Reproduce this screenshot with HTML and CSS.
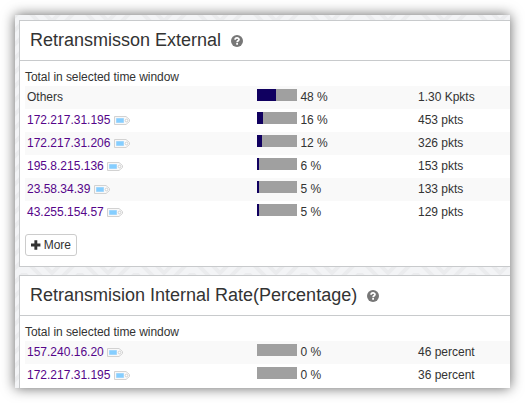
FILE: index.html
```html
<!DOCTYPE html>
<html lang="en">
<head>
<meta charset="utf-8">
<title>Retransmission</title>
<link rel="stylesheet" href="styles.css">
</head>
<body>
<svg class="defs" width="0" height="0">
  <symbol id="help" viewBox="0 0 12 12"><circle cx="6" cy="6" r="6" fill="#777"/><path d="M4.1 4.7C4.1 2.4 8 2.4 8 4.5C8 5.8 6.1 5.8 6.1 7.2" fill="none" stroke="#fff" stroke-width="1.7"/><path d="M5.2 8h1.8v1.700H5.200z" fill="#fff"/></symbol>
  <symbol id="tag" viewBox="0 0 16 9"><path d="M.5.5H12L15.500 3.500V5.500L12 8.500H.5z" fill="#f8f8f8" stroke="#d2d2d2"/><path d="M2.500 2.500h7v4h-7z" fill="#85ceff" stroke="#a0d6fc"/><circle cx="12.500" cy="4.500" r="1.300" fill="#fff" stroke="#c8c8c8" stroke-width=".8"/></symbol>
  <symbol id="plus" viewBox="0 0 10 10"><path d="M3.500 0h3v3.500H10v3H6.500V10h-3V6.500H0v-3h3.500z" fill="#333"/></symbol>
</svg>
<main class="window">
  <svg class="backdrop">
    <defs><pattern id="zigzag" width="56" height="14" patternUnits="userSpaceOnUse" patternTransform="translate(37 6)">
      <path d="M-28 0L0 28L28 0L56 28L84 0M-28 -14L0 14L28 -14L56 14L84 -14M-28 -28L0 0L28 -28L56 0L84 -28" fill="none" stroke="#ebecee" stroke-width="4"/>
    </pattern></defs>
    <rect width="100%" height="100%" fill="url(#zigzag)"/>
  </svg>
  <section class="panel">
    <h2 class="title">Retransmisson External <svg class="help"><use href="#help"/></svg></h2>
    <div class="body">
      <p class="caption">Total in selected time window</p>
      <div class="row"><span>Others</span><span class="rate"><i class="bar"><b style="width:48%"></b></i>48 %</span><span>1.30 Kpkts</span></div>
      <div class="row"><span class="host"><a>172.217.31.195</a><svg class="tag"><use href="#tag"/></svg></span><span class="rate"><i class="bar"><b style="width:16%"></b></i>16 %</span><span>453 pkts</span></div>
      <div class="row"><span class="host"><a>172.217.31.206</a><svg class="tag"><use href="#tag"/></svg></span><span class="rate"><i class="bar"><b style="width:12%"></b></i>12 %</span><span>326 pkts</span></div>
      <div class="row"><span class="host"><a>195.8.215.136</a><svg class="tag"><use href="#tag"/></svg></span><span class="rate"><i class="bar"><b style="width:6%"></b></i>6 %</span><span>153 pkts</span></div>
      <div class="row"><span class="host"><a>23.58.34.39</a><svg class="tag"><use href="#tag"/></svg></span><span class="rate"><i class="bar"><b style="width:5%"></b></i>5 %</span><span>133 pkts</span></div>
      <div class="row"><span class="host"><a>43.255.154.57</a><svg class="tag"><use href="#tag"/></svg></span><span class="rate"><i class="bar"><b style="width:5%"></b></i>5 %</span><span>129 pkts</span></div>
      <button class="more"><svg class="plus"><use href="#plus"/></svg>More</button>
    </div>
  </section>
  <section class="panel">
    <h2 class="title">Retransmision Internal Rate(Percentage) <svg class="help"><use href="#help"/></svg></h2>
    <div class="body">
      <p class="caption">Total in selected time window</p>
      <div class="row"><span class="host"><a>157.240.16.20</a><svg class="tag"><use href="#tag"/></svg></span><span class="rate"><i class="bar"></i>0 %</span><span>46 percent</span></div>
      <div class="row"><span class="host"><a>172.217.31.195</a><svg class="tag"><use href="#tag"/></svg></span><span class="rate"><i class="bar"></i>0 %</span><span>36 percent</span></div>
    </div>
  </section>
</main>
</body>
</html>
```
FILE: styles.css
```css
* { box-sizing: border-box; }
html { background: #fff; overflow: hidden; }
body { margin: 0; padding: 15px; font: 12px/17px "Liberation Sans", Arial, sans-serif; color: #333; }
.defs { position: absolute; }
.window {
  position: relative;
  width: 495px; height: 373px; overflow: hidden;
  display: flex; flex-direction: column; gap: 8px;
  padding: 5px 0 0 4px;
  background: #f3f4f6;
  box-shadow: 0 0 12px rgba(0,0,0,.62);
}
.backdrop { position: absolute; inset: 0; width: 100%; height: 100%; }
.panel { position: relative; flex: none; background: #fff; border: 1px solid #c8cacc; border-right: 0; }
.title {
  display: flex; align-items: center; height: 40px; margin: 0; padding: 0 0 1px 10px;
  border-bottom: 1px solid #c8cacc; font-size: 18px; line-height: 24px; font-weight: 400;
}
.help { width: 12px; height: 12px; margin: 1px 0 0 10px; }
.body { height: 205px; padding: 8px 0 0 5px; }
.caption { margin: 0; height: 17px; letter-spacing: -.05px; }
.row { display: grid; grid-template-columns: 230px 161px 1fr; height: 23px; padding: 3px 0 0 2px; }
.row:nth-child(even) { background: #f9f9f9; }
.host { display: flex; align-items: flex-start; gap: 3.6px; }
.host a { color: #55058a; }
.tag { width: 16px; height: 9px; margin-top: 4px; }
.rate { display: flex; gap: 3.4px; }
.bar { width: 40px; height: 12px; background: #a0a0a0; }
.bar b { display: block; height: 100%; background: #100060; }
.more {
  display: flex; align-items: center; gap: 3px; width: 52px; height: 22px; margin: 10px 0 0;
  padding: 0 5px; border: 1px solid #ccc; border-radius: 3px; background: #fff; color: #333; font: inherit;
}
.plus { width: 10px; height: 10px; }
```
